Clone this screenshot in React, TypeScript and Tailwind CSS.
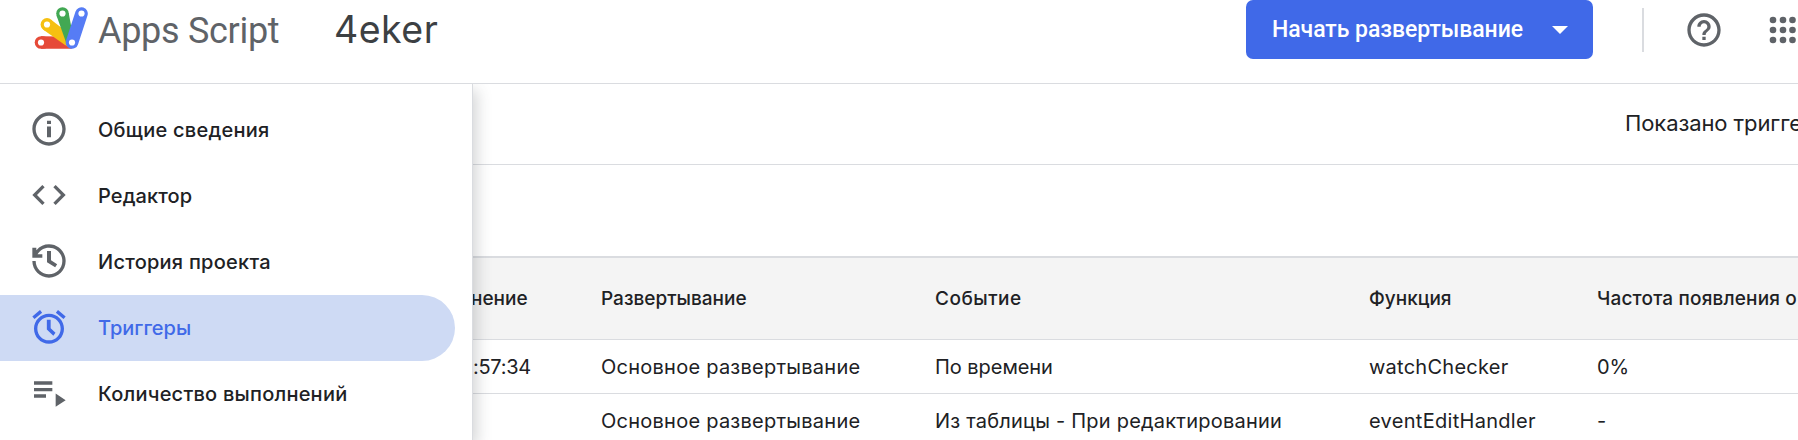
import type { ReactNode } from "react";

function Icon({ children, className = "" }: { children: ReactNode; className?: string }) {
  return (
    <svg viewBox="0 0 24 24" className={`size-10 shrink-0 ${className}`} fill="currentColor">
      {children}
    </svg>
  );
}

function Logo() {
  return (
    <svg viewBox="0 -3.5 56 46" className="h-[46px] w-[56px] shrink-0" strokeWidth="12.6" strokeLinecap="round">
      <path d="M7 32 L9 32" stroke="#e64a38" />
      <path d="M7 25.7 L29 26 L38 38.3 L7 38.3Z" fill="#e64a38" />
      <path d="M16.8 8.900 L33 21.500 L36 37 L31 34.500 L9 19Z" fill="#f6c011" />
      <circle cx="13" cy="14" r="6.4" fill="#f6c011" />
      <path d="M34.700 2.500 L38 20 L33.500 36 L22.500 5Z" fill="#42a853" />
      <circle cx="28.5" cy="3" r="6.3" fill="#42a853" />
      <path d="M38 32 L47.5 3" stroke="#567cf5" />
      <g fill="#fff">
        <circle cx="7" cy="32" r="3.1" />
        <circle cx="13" cy="14" r="3.1" />
        <circle cx="28.5" cy="3" r="3.1" />
        <circle cx="47.5" cy="3" r="3.1" />
        <circle cx="38" cy="32" r="3.1" />
      </g>
    </svg>
  );
}

const nav = [
  {
    label: "Общие сведения",
    tracking: "tracking-[0.25px]",
    icon: <path d="M10.800 7h2.400v2h-2.400zm0 3.500h2.400v6.500h-2.400zM12 2C6.480 2 2 6.480 2 12s4.480 10 10 10 10-4.480 10-10S17.520 2 12 2zm0 18c-4.410 0-8-3.590-8-8s3.590-8 8-8 8 3.590 8 8-3.590 8-8 8z" />,
  },
  {
    label: "Редактор",
    tracking: "tracking-[0.1px]",
    icon: <path d="M9.4 16.6 4.8 12l4.6-4.6L8 6l-6 6 6 6 1.4-1.4zm5.2 0 4.6-4.6-4.6-4.6L16 6l6 6-6 6-1.4-1.4z" />,
  },
  {
    label: "История проекта",
    tracking: "tracking-[0.25px]",
    icon: (
      <>
        <path d="M10.800 6v6.700l4.900 3 1.200-1.800-3.700-2.300V6z" />
        <path d="M12 2C9.100 2 6.500 3.200 4.400 5.500V4H2v6h6V8H5.100C6.500 5.600 9 4 12 4c4.400 0 8 3.600 8 8s-3.600 8-8 8-8-3.600-8-8H2c0 5.500 4.500 10 10 10s10-4.500 10-10S17.500 2 12 2z" />
      </>
    ),
  },
  {
    label: "Триггеры",
    tracking: "tracking-normal",
    active: true,
    icon: <path d="M22 5.720l-4.600-3.860-1.290 1.530 4.600 3.860L22 5.720zM7.880 3.390L6.600 1.860 2 5.710l1.290 1.530 4.590-3.850zM13 7.600h-2.300v5.900l3.900 3.700 1.300-1.700-2.900-2.700V7.600zM12 4c-4.970 0-9 4.030-9 9s4.020 9 9 9c4.970 0 9-4.030 9-9s-4.030-9-9-9zm0 16c-3.870 0-7-3.130-7-7s3.130-7 7-7 7 3.130 7 7-3.130 7-7 7z" />,
  },
  {
    label: "Количество выполнений",
    tracking: "tracking-[0.23px]",
    icon: <path d="M3 5h11v2H3zM3 9h11v2H3zM3 12.800h7.200v2H3zM16 12.300v8l6-4z" />,
  },
];

const columns = "grid grid-cols-[128px_334px_434px_228px_1fr] items-center whitespace-nowrap";

export default function App() {
  return (
    <div className="flex h-[440px] w-full flex-col overflow-hidden bg-white font-['Inter','Liberation_Sans',sans-serif] text-[#202124]">
      <header className="flex h-[84px] shrink-0 items-start border-b border-[#dadce0] pl-[34px]">
        <div className="flex h-[60px] flex-1 items-center whitespace-nowrap">
          <Logo />
          <span className="ml-2 w-[236px] pt-px font-['Roboto'] text-[36px] leading-[40px] tracking-[-0.3px] text-[#5f6368]">Apps Script</span>
          <h1 className="text-[37.5px] leading-[40px] tracking-[0.5px] text-[#3c4043]">4eker</h1>
        </div>
        <button className="flex h-[59px] w-[347px] shrink-0 items-center rounded-[7px] bg-[#4069e8] pt-px pl-[26px] font-['Roboto'] text-[23px] font-medium tracking-[-0.05px] whitespace-nowrap text-white">
          Начать развертывание
          <svg viewBox="0 0 16 8" className="mr-[25px] ml-auto h-2 w-4" fill="currentColor">
            <path d="M0 0h16l-8 8z" />
          </svg>
        </button>
        <div className="mt-2 ml-[49px] h-11 w-[2px] bg-[#dadce0]" />
        <Icon className="mt-[10px] ml-10 text-[#5f6368]">
          <path d="M11 18h2v-2h-2v2zm1-16C6.480 2 2 6.480 2 12s4.480 10 10 10 10-4.480 10-10S17.520 2 12 2zm0 18c-4.410 0-8-3.590-8-8s3.590-8 8-8 8 3.590 8 8-3.590 8-8 8zm0-14c-2.210 0-4 1.790-4 4h2c0-1.100.9-2 2-2s2 .9 2 2c0 2-3 1.750-3 5h2c0-2.250 3-2.500 3-5 0-2.210-1.790-4-4-4z" />
        </Icon>
        <svg viewBox="0 0 29 28" className="mt-4 ml-[45px] h-7 w-[29px] shrink-0 fill-[#5f6368]">
          {[4, 14, 24].map((y) => [4, 14, 23.5].map((x) => <circle key={`${x}-${y}`} cx={x} cy={y} r="3.3" />))}
        </svg>
      </header>

      <div className="flex min-h-0 flex-1">
        <nav className="z-10 w-[473px] shrink-0 border-r border-[#dadce0] bg-white pt-[13px] shadow-[4px_6px_14px_rgba(60,64,67,0.22)] [clip-path:inset(0_-30px_0_0)]">
          {nav.map(({ label, icon, active, tracking }) => (
            <a
              key={label}
              className={`flex h-[66px] w-[455px] items-center gap-[29px] rounded-r-full pl-[29px] ${active ? "bg-[#cedaf4] text-[#4069e8]" : ""}`}
            >
              <Icon className={active ? "mb-[2px]" : "mb-[2px] text-[#5f6368]"}>{icon}</Icon>
              <span className={`text-[20px] leading-6 font-medium ${tracking}`}>{label}</span>
            </a>
          ))}
        </nav>

        <main className="min-w-0 flex-1">
          <div className="flex h-[81px] items-center border-b border-[#dadce0] pb-[2px] pl-[1152px] text-[22px] tracking-[-0.1px] whitespace-nowrap">
            Показано тригге
          </div>
          <div className="h-[91px]" />
          <div className={`${columns} h-[84px] border-t-2 border-b border-[#dadce0] bg-[#f4f4f4] pt-[2px] text-[19px] font-medium`}>
            <span className="-ml-[2px]">нение</span>
            <span>Развертывание</span>
            <span className="tracking-[0.5px]">Событие</span>
            <span>Функция</span>
            <span className="tracking-[0.16px]">Частота появления о</span>
          </div>
          <div className={`${columns} h-[54px] border-b border-[#dadce0] text-[20px]`}>
            <span className="tracking-[-0.3px]">:57:34</span>
            <span className="tracking-[0.25px]">Основное развертывание</span>
            <span className="tracking-[-0.05px]">По времени</span>
            <span className="tracking-[0.25px]">watchChecker</span>
            <span>0%</span>
          </div>
          <div className={`${columns} h-[54px] text-[20px]`}>
            <span />
            <span className="tracking-[0.25px]">Основное развертывание</span>
            <span className="tracking-[0.22px]">Из таблицы - При редактировании</span>
            <span className="tracking-[0.3px]">eventEditHandler</span>
            <span>-</span>
          </div>
        </main>
      </div>
    </div>
  );
}
